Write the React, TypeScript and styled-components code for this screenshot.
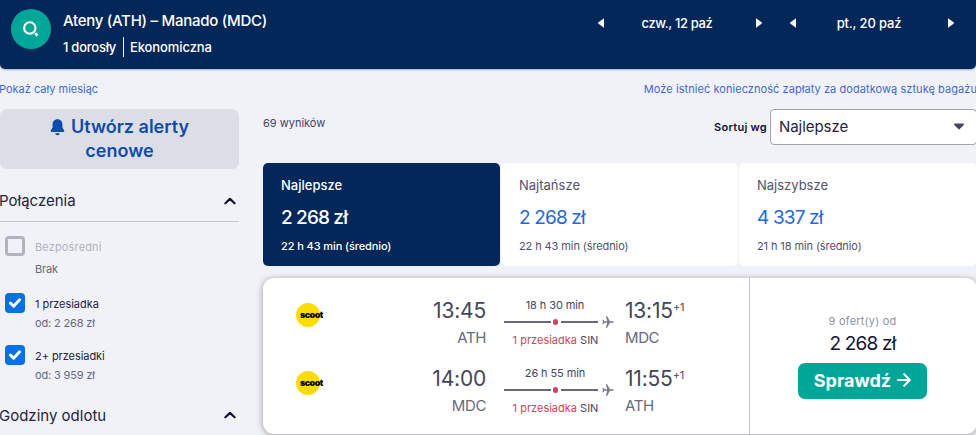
import styled, { createGlobalStyle } from 'styled-components'

const GlobalStyle = createGlobalStyle`
    * {
        box-sizing: border-box;
    }
    body {
        margin: 0;
        background-color: #f1f2f8;
        color: #161616;
        font-family: Inter, "Liberation Sans", sans-serif;
        font-size: 11px;
        overflow: hidden;
    }
    button {
        font-family: inherit;
        border: none;
    }
`

const legs = [
    { from: 'ATH', to: 'MDC', departs: '13:45', arrives: '13:15', duration: '18 h 30 min' },
    { from: 'MDC', to: 'ATH', departs: '14:00', arrives: '11:55', duration: '26 h 55 min' },
]

const tabs = [
    { name: 'Najlepsze', price: '2 268 zł', time: '22 h 43 min (średnio)', active: true },
    { name: 'Najtańsze', price: '2 268 zł', time: '22 h 43 min (średnio)', active: false },
    { name: 'Najszybsze', price: '4 337 zł', time: '21 h 18 min (średnio)', active: false },
]

const stops = [
    { name: 'Bezpośredni', detail: 'Brak', checked: false },
    { name: '1 przesiadka', detail: 'od: 2 268 zł', checked: true },
    { name: '2+ przesiadki', detail: 'od: 3 959 zł', checked: true },
]

const Chevron = () => (
    <svg width="12" height="8" viewBox="0 0 12 8" fill="none" stroke="#111236" strokeWidth="2.2" strokeLinecap="round" strokeLinejoin="round">
        <path d="M1.4 6.3 6 1.9l4.6 4.4" />
    </svg>
)

const Arrow = ({ left }: { left?: boolean }) => (
    <svg width="6" height="10" viewBox="0 0 6 10" fill="#fff">
        <path d={left ? 'M6 .3v9.4L.5 5.700a.9.9 0 0 1 0-1.400z' : 'M0 .3v9.400l5.500-4a.9.9 0 0 0 0-1.400z'} />
    </svg>
)

const Plane = () => (
    <svg width="12" height="12" viewBox="0 0 12 12" fill="#77788c">
        <path d="M11.2 5.3H8L5.2.2H3.9l1.4 5.1H2.4L1.3 3.700H.3L1 6l-.7 2.300h1l1.100-1.600h2.900l-1.400 5.100h1.300L8 6.700h3.200c.5 0 .8-.3.8-.7s-.3-.7-.8-.7z" />
    </svg>
)

const App = () => {
    return (
        <>
            <GlobalStyle />
            <Header>
                <SearchButton>
                    <svg width="18" height="18" viewBox="0 0 18 18" fill="none" stroke="#fff">
                        <circle cx="7.8" cy="8" r="5.7" strokeWidth="2.1" />
                        <path d="m13.200 13.200 2.400 2.400" strokeWidth="2.8" />
                    </svg>
                </SearchButton>
                <Trip>
                    <Route>Ateny (ATH) – Manado (MDC)</Route>
                    <Details>
                        <Travellers>1 dorosły</Travellers>
                        <Cabin>Ekonomiczna</Cabin>
                    </Details>
                </Trip>
                <Dates>
                    <DatePicker><Arrow left /><DateText $spacing={-0.35}>czw., 12 paź</DateText><Arrow /></DatePicker>
                    <DatePicker><Arrow left /><DateText $spacing={-0.15}>pt., 20 paź</DateText><Arrow /></DatePicker>
                </Dates>
            </Header>

            <LinkRow>
                <MonthLink>Pokaż cały miesiąc</MonthLink>
                <BaggageLink>Może istnieć konieczność zapłaty za dodatkową sztukę bagażu</BaggageLink>
            </LinkRow>

            <Columns>
                <Sidebar>
                    <AlertButton>
                        <AlertLine>
                            <svg width="15" height="17" viewBox="0 0 15 17" fill="#0c4cae">
                                <path d="M7.5.3C4.2.3 2.6 2.7 2.6 5.5v3L.9 11.2c-.5.9-.1 1.7.8 1.7h11.6c.9 0 1.3-.8.8-1.7l-1.7-2.7v-3C12.4 2.7 10.8.3 7.5.3zM5.3 14.2h4.400c0 1.200-1 2-2.200 2s-2.200-.8-2.200-2z" />
                            </svg>
                            Utwórz alerty
                        </AlertLine>
                        <AlertLine>cenowe</AlertLine>
                    </AlertButton>
                    <SectionHeading $line><HeadingText>Połączenia</HeadingText><Chevron /></SectionHeading>
                    <StopList>
                        {stops.map((stop) => (
                            <Stop key={stop.name}>
                                <Checkbox $checked={stop.checked}>
                                    {stop.checked && (
                                        <svg width="14" height="12" viewBox="0 0 14 12" fill="none" stroke="#fff" strokeWidth="3" strokeLinecap="round" strokeLinejoin="round">
                                            <path d="m2.400 6 3.200 3.200 6-6.400" />
                                        </svg>
                                    )}
                                </Checkbox>
                                <div>
                                    <StopName $disabled={!stop.checked}>{stop.name}</StopName>
                                    <StopDetail $disabled={!stop.checked}>{stop.detail}</StopDetail>
                                </div>
                            </Stop>
                        ))}
                    </StopList>
                    <SectionHeading><HeadingText>Godziny odlotu</HeadingText><Chevron /></SectionHeading>
                </Sidebar>

                <Results>
                    <Toolbar>
                        <Count>69 wyników</Count>
                        <SortLabel>Sortuj wg</SortLabel>
                        <Select>
                            Najlepsze
                            <svg width="10" height="7" viewBox="0 0 10 7" fill="#444560">
                                <path d="M1 .5h8c.8 0 1.200.8.700 1.400L5.700 6.100c-.4.5-1 .5-1.400 0L.3 1.900C-.2 1.300.2.5 1 .5z" />
                            </svg>
                        </Select>
                    </Toolbar>
                    <Tabs>
                        {tabs.map((tab) => (
                            <Tab key={tab.name} $active={tab.active}>
                                <TabName>{tab.name}</TabName>
                                <TabPrice $active={tab.active}>{tab.price}</TabPrice>
                                <TabTime>{tab.time}</TabTime>
                            </Tab>
                        ))}
                    </Tabs>
                    <Ticket>
                        <Legs>
                            {legs.map((leg) => (
                                <Leg key={leg.from}>
                                    <Logo><LogoText>scoot</LogoText></Logo>
                                    <Departure>
                                        <Time>{leg.departs}</Time>
                                        <Airport>{leg.from}</Airport>
                                    </Departure>
                                    <Flight>
                                        <Duration>{leg.duration}</Duration>
                                        <Track>
                                            <Line $width={47} />
                                            <Dot />
                                            <Line $width={37} />
                                            <Plane />
                                        </Track>
                                        <StopCount><Red>1 przesiadka</Red> SIN</StopCount>
                                    </Flight>
                                    <Arrival>
                                        <Time>{leg.arrives}<NextDay>+1</NextDay></Time>
                                        <Airport>{leg.to}</Airport>
                                    </Arrival>
                                </Leg>
                            ))}
                        </Legs>
                        <Offer>
                            <OfferCount>9 ofert(y) od</OfferCount>
                            <OfferPrice>2 268 zł</OfferPrice>
                            <CheckButton>
                                Sprawdź
                                <svg width="14" height="14" viewBox="0 0 14 14" fill="none" stroke="#fff" strokeWidth="2" strokeLinecap="round" strokeLinejoin="round">
                                    <path d="M1 7h11.500M7.200 1.300 12.700 7l-5.500 5.700" />
                                </svg>
                            </CheckButton>
                        </Offer>
                    </Ticket>
                </Results>
            </Columns>
        </>
    )
}

const Header = styled.header`
    display: flex;
    height: 69px;
    padding: 9px 22px 0 11px;
    background-color: #042759;
    border-radius: 0 0 5px 5px;
    box-shadow: 0 1px 2px rgba(4, 39, 89, 0.35);
    color: #fff;
`

const SearchButton = styled.button`
    display: flex;
    align-items: center;
    justify-content: center;
    width: 40px;
    height: 40px;
    padding: 0;
    border-radius: 50%;
    background-color: #00a698;
`

const Trip = styled.div`
    margin-left: 12px;
    font-weight: 500;
    white-space: nowrap;
`

const Route = styled.div`
    font-size: 15px;
    line-height: 24px;
    letter-spacing: -0.28px;
`

const Details = styled.div`
    display: flex;
    margin-top: 4px;
    font-size: 13px;
    line-height: 20px;
`

const Travellers = styled.span`
    width: 61px;
    border-right: 1px solid #fff;
    letter-spacing: -0.25px;
`

const Cabin = styled.span`
    margin-left: 6px;
    letter-spacing: -0.1px;
`

const Dates = styled.div`
    display: flex;
    gap: 28px;
    height: 28px;
    margin-left: auto;
`

const DatePicker = styled.div`
    display: flex;
    align-items: center;
    justify-content: space-between;
    width: 164px;
`

const DateText = styled.span<{ $spacing: number }>`
    margin-right: 6px;
    font-size: 13px;
    font-weight: 500;
    letter-spacing: ${({ $spacing }) => $spacing}px;
`

const LinkRow = styled.div`
    display: flex;
    justify-content: space-between;
    height: 40px;
    line-height: 40px;
    color: #3d6bcb;
    white-space: nowrap;
`

const MonthLink = styled.a`
    margin-left: -1px;
`

const BaggageLink = styled.a`
    margin-right: -1px;
    letter-spacing: 0.06px;
`

const Columns = styled.div`
    display: flex;
    gap: 24px;
`

const Sidebar = styled.aside`
    width: 239px;
`

const AlertButton = styled.button`
    display: block;
    width: 239px;
    height: 60px;
    padding: 6px 0;
    border-radius: 7px;
    background-color: #dddee5;
    color: #0c4cae;
    font-size: 18px;
    font-weight: 600;
`

const AlertLine = styled.span`
    display: flex;
    align-items: center;
    justify-content: center;
    gap: 6px;
    line-height: 24px;
`

const SectionHeading = styled.div<{ $line?: boolean }>`
    display: flex;
    align-items: center;
    justify-content: space-between;
    height: ${({ $line }) => ($line ? '53px' : '42px')};
    padding: ${({ $line }) => ($line ? '11px' : '0')} 3px 0 0;
    border-bottom: ${({ $line }) => ($line ? '1px solid #c6c7d6' : 'none')};
    color: #24243c;
    font-size: 15px;
`

const HeadingText = styled.span`
    margin-left: -1px;
`

const StopList = styled.div`
    display: flex;
    flex-direction: column;
    gap: 14px;
    padding: 14px 0 10px 5px;
`

const Stop = styled.div`
    display: flex;
    gap: 10px;
`

const Checkbox = styled.span<{ $checked: boolean }>`
    display: flex;
    align-items: center;
    justify-content: center;
    width: 20px;
    height: 20px;
    margin-top: ${({ $checked }) => ($checked ? '-1px' : '0')};
    border: ${({ $checked }) => ($checked ? 'none' : '3px solid #b2b3bd')};
    border-radius: 4px;
    background-color: ${({ $checked }) => ($checked ? '#0770e3' : 'transparent')};
`

const StopName = styled.div<{ $disabled: boolean }>`
    line-height: ${({ $disabled }) => ($disabled ? 22 : 20)}px;
    color: ${({ $disabled }) => ($disabled ? '#b2b3c0' : '#24243c')};
    letter-spacing: ${({ $disabled }) => ($disabled ? 0.15 : -0.05)}px;
`

const StopDetail = styled.div<{ $disabled: boolean }>`
    line-height: ${({ $disabled }) => ($disabled ? 22 : 18)}px;
    color: #68697f;
    letter-spacing: -0.15px;
`

const Results = styled.main`
    width: 713px;
    flex-shrink: 0;
`

const Toolbar = styled.div`
    display: flex;
    height: 36px;
`

const Count = styled.span`
    color: #444560;
    line-height: 28px;
`

const SortLabel = styled.label`
    margin: 0 3px 0 auto;
    line-height: 36px;
    font-weight: 600;
    letter-spacing: 0.25px;
    color: #111236;
`

const Select = styled.div`
    display: flex;
    align-items: center;
    justify-content: space-between;
    width: 207px;
    margin-right: -1px;
    padding: 0 12px 1px 8px;
    border: 1px solid #a2a3b0;
    border-radius: 4px;
    background-color: #fff;
    color: #24243c;
    font-size: 15px;
    letter-spacing: -0.05px;
`

const Tabs = styled.div`
    display: grid;
    grid-template-columns: repeat(3, 237px);
    gap: 1px;
    margin-top: 18px;
`

const Tab = styled.div<{ $active: boolean }>`
    height: 103px;
    padding: 11px 18px;
    border-radius: 5px;
    background-color: ${({ $active }) => ($active ? '#042759' : '#fff')};
    color: ${({ $active }) => ($active ? '#fff' : '#51526a')};
    font-weight: ${({ $active }) => ($active ? 500 : 400)};
`

const TabName = styled.div`
    font-size: 13px;
    line-height: 22px;
`

const TabPrice = styled.div<{ $active: boolean }>`
    margin-top: 8px;
    color: ${({ $active }) => ($active ? '#fff' : '#2467d6')};
    font-size: 19px;
    line-height: 28px;
    letter-spacing: -0.85px;
`

const TabTime = styled.div`
    margin-top: 3px;
    line-height: 22px;
    letter-spacing: -0.1px;
`

const Ticket = styled.div`
    display: flex;
    width: 714px;
    height: 156px;
    margin-top: 12px;
    border-radius: 11px;
    background-color: #fff;
    box-shadow: 0 1px 6px rgba(37, 32, 31, 0.45);
`

const Legs = styled.div`
    width: 487px;
    padding-top: 18px;
    border-right: 1px solid #c4c5cc;
`

const Leg = styled.div`
    display: flex;
    height: 68px;
`

const Logo = styled.div`
    display: flex;
    align-items: center;
    width: 24px;
    height: 24px;
    margin: 7px 0 0 33px;
    padding: 0 0 2px 4px;
    border-radius: 50%;
    background-color: #fbdc05;
`

const LogoText = styled.span`
    color: #000;
    font-size: 9px;
    font-weight: 900;
    letter-spacing: -0.55px;
`

const Departure = styled.div`
    width: 166px;
    padding-top: 1px;
    text-align: right;
`

const Time = styled.div`
    display: flex;
    justify-content: flex-end;
    color: #444560;
    font-size: 21px;
    line-height: 28px;
    letter-spacing: -0.2px;
`

const Airport = styled.div`
    color: #68697f;
    font-size: 15px;
    line-height: 26px;
    letter-spacing: -0.4px;
`

const Flight = styled.div`
    width: 110px;
    margin-left: 18px;
    color: #444560;
`

const Duration = styled.div`
    width: 102px;
    line-height: 18px;
    letter-spacing: -0.1px;
    text-align: center;
`

const Track = styled.div`
    display: flex;
    align-items: center;
    height: 16px;
`

const Line = styled.span<{ $width: number }>`
    width: ${({ $width }) => $width}px;
    height: 2px;
    background-color: #68697f;
    & + svg {
        margin-left: 4px;
    }
`

const Dot = styled.span`
    width: 6px;
    height: 6px;
    margin: 0 2px;
    border-radius: 50%;
    background-color: #d1435b;
    & + ${Line} {
        margin-left: 1px;
    }
    ${Line} + & {
        margin-left: 2px;
    }
`

const StopCount = styled.div`
    width: 103px;
    line-height: 20px;
    text-align: center;
`

const Red = styled.span`
    color: #d1435b;
`

const Arrival = styled.div`
    margin-left: 11px;
    padding-top: 1px;
    ${Time} {
        justify-content: flex-start;
    }
`

const NextDay = styled.span`
    font-size: 11px;
    line-height: 21px;
`

const Offer = styled.div`
    display: flex;
    flex-direction: column;
    align-items: center;
    width: 225px;
    padding-top: 33px;
`

const OfferCount = styled.div`
    color: #8f90a0;
    line-height: 20px;
    letter-spacing: 0.2px;
`

const OfferPrice = styled.div`
    color: #111236;
    font-size: 19px;
    line-height: 26px;
    letter-spacing: -0.8px;
`

const CheckButton = styled.button`
    display: flex;
    align-items: center;
    justify-content: center;
    gap: 6px;
    width: 129px;
    height: 36px;
    margin-top: 6px;
    padding-bottom: 3px;
    border-radius: 7px;
    background-color: #00a698;
    color: #fff;
    font-size: 18px;
    font-weight: 700;
`

export default App
